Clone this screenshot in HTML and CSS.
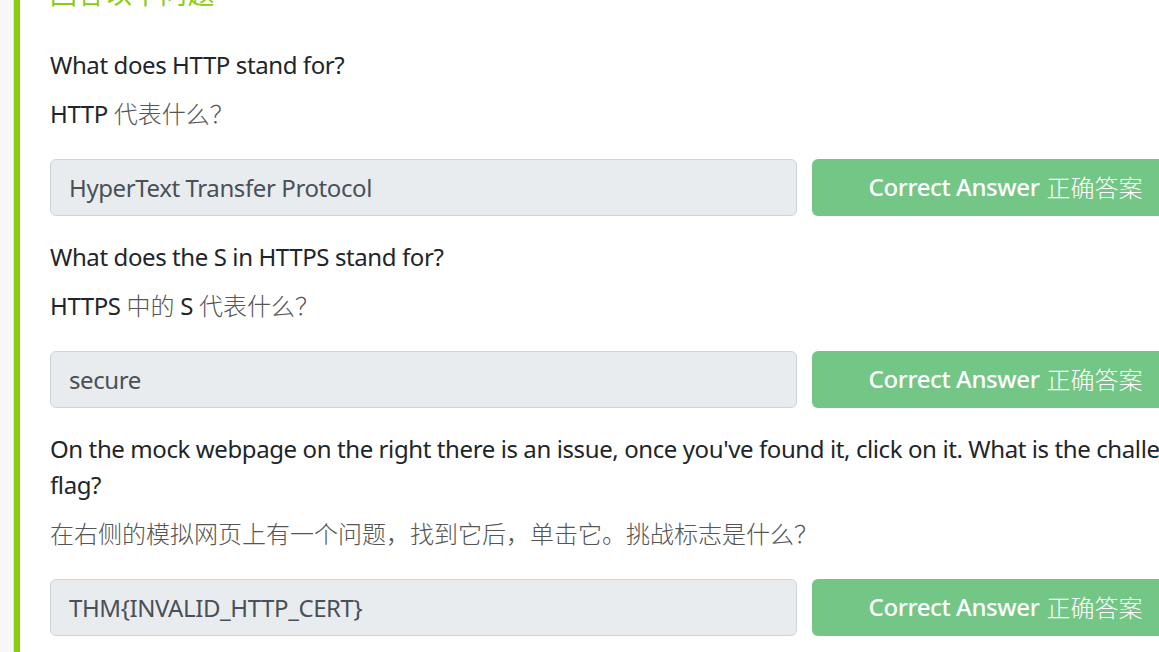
FILE: index.html
```html
<!DOCTYPE html>
<html lang="zh-CN">
<head>
<meta charset="utf-8">
<title>Answer the questions</title>
<link rel="stylesheet" href="styles.css">
</head>
<body>
<div class="page">
  <aside class="gutter"></aside>
  <main class="panel">
    <h2 class="title">回答以下问题</h2>

    <section class="question">
      <p class="q-en">What does HTTP stand for?</p>
      <p class="q-zh">HTTP <span class="zh">代表什么？</span></p>
      <div class="answer-row">
        <div class="answer-field">HyperText Transfer Protocol</div>
        <div class="answer-btn">Correct Answer <span class="zh">正确答案</span></div>
      </div>
    </section>

    <section class="question">
      <p class="q-en">What does the S in HTTPS stand for?</p>
      <p class="q-zh">HTTPS <span class="zh">中的</span> S <span class="zh">代表什么？</span></p>
      <div class="answer-row">
        <div class="answer-field">secure</div>
        <div class="answer-btn">Correct Answer <span class="zh">正确答案</span></div>
      </div>
    </section>

    <section class="question">
      <p class="q-en">On the mock webpage on the right there is an issue, once you've found it, click on it. What is the challenge flag?</p>
      <p class="q-zh"><span class="zh">在右侧的模拟网页上有一个问题，找到它后，单击它。挑战标志是什么？</span></p>
      <div class="answer-row">
        <div class="answer-field">THM{INVALID_HTTP_CERT}</div>
        <div class="answer-btn">Correct Answer <span class="zh">正确答案</span></div>
      </div>
    </section>
  </main>
</div>
</body>
</html>
```

FILE: styles.css
```css
html, body {
  margin: 0;
  padding: 0;
  background: #ffffff;
  overflow: hidden;
}

body {
  font-family: "Noto Sans", "Noto Sans CJK SC", sans-serif;
  font-size: 24px;
  letter-spacing: -0.4px;
  color: #212529;
}

.page {
  display: flex;
  width: 1230px;
  min-height: 652px;
}

.gutter {
  width: 13px;
  flex: 0 0 13px;
  background: #f7f7f7;
  border-right: 1px solid #e2e2e2;
}

.panel {
  flex: 1 1 auto;
  border-left: 6px solid #88cc14;
  padding: 0 0 0 30px;
  width: 1149px;
}

.title {
  margin: -21px 0 41px;
  font-family: "Noto Sans CJK SC", sans-serif;
  font-size: 27px;
  line-height: 27px;
  font-weight: 400;
  letter-spacing: 0.5px;
  color: #88cc14;
}

.question {
  margin: 0 0 23px;
}

.question p {
  margin: 0 0 12px;
  line-height: 36px;
}

.question .q-zh {
  margin-bottom: 27px;
}

.zh {
  font-family: "Noto Sans CJK SC", sans-serif;
  font-weight: 300;
  letter-spacing: 0;
  color: #555555;
}

.answer-row {
  display: flex;
  gap: 15px;
  width: 1149px;
}

.answer-field {
  flex: 1 1 auto;
  height: 55px;
  box-sizing: content-box;
  display: flex;
  align-items: center;
  padding: 0 18px;
  background: #e9ecef;
  border: 1px solid #ced4da;
  border-radius: 6px;
  color: #495057;
}

.answer-btn {
  flex: 0 0 387px;
  height: 57px;
  display: flex;
  align-items: center;
  justify-content: center;
  padding-bottom: 2px;
  box-sizing: border-box;
  background: #73c686;
  color: #ffffff;
  border-radius: 6px;
  font-weight: 500;
}

.answer-btn .zh {
  color: #ffffff;
  margin-left: 7px;
}
```
